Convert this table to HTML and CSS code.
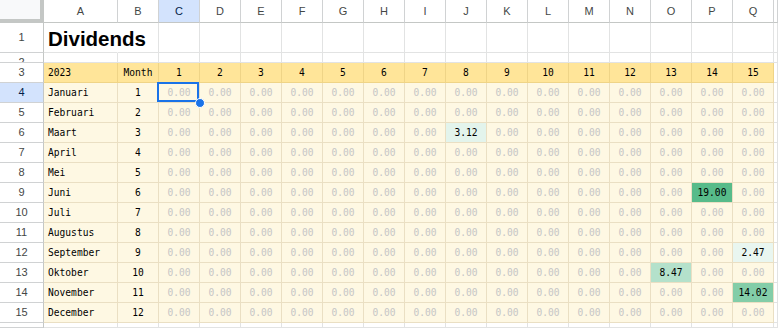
FILE: index.html
```html
<!DOCTYPE html>
<html>
<head>
<meta charset="utf-8">
<link rel="stylesheet" href="styles.css">
</head>
<body>
<div class="sheet">
<div class="c corner"></div><div class="c ch">A</div><div class="c ch">B</div><div class="c ch sel">C</div><div class="c ch">D</div><div class="c ch">E</div><div class="c ch">F</div><div class="c ch">G</div><div class="c ch">H</div><div class="c ch">I</div><div class="c ch">J</div><div class="c ch">K</div><div class="c ch">L</div><div class="c ch">M</div><div class="c ch">N</div><div class="c ch">O</div><div class="c ch">P</div><div class="c ch">Q</div><div class="c ch"></div>

<div class="c rh">1</div><div class="c w title">Dividends</div><div class="c w"></div><div class="c w"></div><div class="c w"></div><div class="c w"></div><div class="c w"></div><div class="c w"></div><div class="c w"></div><div class="c w"></div><div class="c w"></div><div class="c w"></div><div class="c w"></div><div class="c w"></div><div class="c w"></div><div class="c w"></div><div class="c w"></div><div class="c w"></div><div class="c w"></div>

<div class="c rh short">2</div><div class="c w"></div><div class="c w"></div><div class="c w"></div><div class="c w"></div><div class="c w"></div><div class="c w"></div><div class="c w"></div><div class="c w"></div><div class="c w"></div><div class="c w"></div><div class="c w"></div><div class="c w"></div><div class="c w"></div><div class="c w"></div><div class="c w"></div><div class="c w"></div><div class="c w"></div><div class="c w"></div>

<div class="c rh">3</div><div class="c y l">2023</div><div class="c y">Month</div><div class="c y">1</div><div class="c y">2</div><div class="c y">3</div><div class="c y">4</div><div class="c y">5</div><div class="c y">6</div><div class="c y">7</div><div class="c y">8</div><div class="c y">9</div><div class="c y">10</div><div class="c y">11</div><div class="c y">12</div><div class="c y">13</div><div class="c y">14</div><div class="c y">15</div><div class="c w"></div>

<div class="c rh sel">4</div><div class="c d l">Januari</div><div class="c d">1</div><div class="c d z active">0.00</div><div class="c d z">0.00</div><div class="c d z">0.00</div><div class="c d z">0.00</div><div class="c d z">0.00</div><div class="c d z">0.00</div><div class="c d z">0.00</div><div class="c d z">0.00</div><div class="c d z">0.00</div><div class="c d z">0.00</div><div class="c d z">0.00</div><div class="c d z">0.00</div><div class="c d z">0.00</div><div class="c d z">0.00</div><div class="c d z">0.00</div><div class="c w"></div>

<div class="c rh">5</div><div class="c d l">Februari</div><div class="c d">2</div><div class="c d z">0.00</div><div class="c d z">0.00</div><div class="c d z">0.00</div><div class="c d z">0.00</div><div class="c d z">0.00</div><div class="c d z">0.00</div><div class="c d z">0.00</div><div class="c d z">0.00</div><div class="c d z">0.00</div><div class="c d z">0.00</div><div class="c d z">0.00</div><div class="c d z">0.00</div><div class="c d z">0.00</div><div class="c d z">0.00</div><div class="c d z">0.00</div><div class="c w"></div>

<div class="c rh">6</div><div class="c d l">Maart</div><div class="c d">3</div><div class="c d z">0.00</div><div class="c d z">0.00</div><div class="c d z">0.00</div><div class="c d z">0.00</div><div class="c d z">0.00</div><div class="c d z">0.00</div><div class="c d z">0.00</div><div class="c d g1">3.12</div><div class="c d z">0.00</div><div class="c d z">0.00</div><div class="c d z">0.00</div><div class="c d z">0.00</div><div class="c d z">0.00</div><div class="c d z">0.00</div><div class="c d z">0.00</div><div class="c w"></div>

<div class="c rh">7</div><div class="c d l">April</div><div class="c d">4</div><div class="c d z">0.00</div><div class="c d z">0.00</div><div class="c d z">0.00</div><div class="c d z">0.00</div><div class="c d z">0.00</div><div class="c d z">0.00</div><div class="c d z">0.00</div><div class="c d z">0.00</div><div class="c d z">0.00</div><div class="c d z">0.00</div><div class="c d z">0.00</div><div class="c d z">0.00</div><div class="c d z">0.00</div><div class="c d z">0.00</div><div class="c d z">0.00</div><div class="c w"></div>

<div class="c rh">8</div><div class="c d l">Mei</div><div class="c d">5</div><div class="c d z">0.00</div><div class="c d z">0.00</div><div class="c d z">0.00</div><div class="c d z">0.00</div><div class="c d z">0.00</div><div class="c d z">0.00</div><div class="c d z">0.00</div><div class="c d z">0.00</div><div class="c d z">0.00</div><div class="c d z">0.00</div><div class="c d z">0.00</div><div class="c d z">0.00</div><div class="c d z">0.00</div><div class="c d z">0.00</div><div class="c d z">0.00</div><div class="c w"></div>

<div class="c rh">9</div><div class="c d l">Juni</div><div class="c d">6</div><div class="c d z">0.00</div><div class="c d z">0.00</div><div class="c d z">0.00</div><div class="c d z">0.00</div><div class="c d z">0.00</div><div class="c d z">0.00</div><div class="c d z">0.00</div><div class="c d z">0.00</div><div class="c d z">0.00</div><div class="c d z">0.00</div><div class="c d z">0.00</div><div class="c d z">0.00</div><div class="c d z">0.00</div><div class="c d g5">19.00</div><div class="c d z">0.00</div><div class="c w"></div>

<div class="c rh">10</div><div class="c d l">Juli</div><div class="c d">7</div><div class="c d z">0.00</div><div class="c d z">0.00</div><div class="c d z">0.00</div><div class="c d z">0.00</div><div class="c d z">0.00</div><div class="c d z">0.00</div><div class="c d z">0.00</div><div class="c d z">0.00</div><div class="c d z">0.00</div><div class="c d z">0.00</div><div class="c d z">0.00</div><div class="c d z">0.00</div><div class="c d z">0.00</div><div class="c d z">0.00</div><div class="c d z">0.00</div><div class="c w"></div>

<div class="c rh">11</div><div class="c d l">Augustus</div><div class="c d">8</div><div class="c d z">0.00</div><div class="c d z">0.00</div><div class="c d z">0.00</div><div class="c d z">0.00</div><div class="c d z">0.00</div><div class="c d z">0.00</div><div class="c d z">0.00</div><div class="c d z">0.00</div><div class="c d z">0.00</div><div class="c d z">0.00</div><div class="c d z">0.00</div><div class="c d z">0.00</div><div class="c d z">0.00</div><div class="c d z">0.00</div><div class="c d z">0.00</div><div class="c w"></div>

<div class="c rh">12</div><div class="c d l">September</div><div class="c d">9</div><div class="c d z">0.00</div><div class="c d z">0.00</div><div class="c d z">0.00</div><div class="c d z">0.00</div><div class="c d z">0.00</div><div class="c d z">0.00</div><div class="c d z">0.00</div><div class="c d z">0.00</div><div class="c d z">0.00</div><div class="c d z">0.00</div><div class="c d z">0.00</div><div class="c d z">0.00</div><div class="c d z">0.00</div><div class="c d z">0.00</div><div class="c d g0">2.47</div><div class="c w"></div>

<div class="c rh">13</div><div class="c d l">Oktober</div><div class="c d">10</div><div class="c d z">0.00</div><div class="c d z">0.00</div><div class="c d z">0.00</div><div class="c d z">0.00</div><div class="c d z">0.00</div><div class="c d z">0.00</div><div class="c d z">0.00</div><div class="c d z">0.00</div><div class="c d z">0.00</div><div class="c d z">0.00</div><div class="c d z">0.00</div><div class="c d z">0.00</div><div class="c d g3">8.47</div><div class="c d z">0.00</div><div class="c d z">0.00</div><div class="c w"></div>

<div class="c rh">14</div><div class="c d l">November</div><div class="c d">11</div><div class="c d z">0.00</div><div class="c d z">0.00</div><div class="c d z">0.00</div><div class="c d z">0.00</div><div class="c d z">0.00</div><div class="c d z">0.00</div><div class="c d z">0.00</div><div class="c d z">0.00</div><div class="c d z">0.00</div><div class="c d z">0.00</div><div class="c d z">0.00</div><div class="c d z">0.00</div><div class="c d z">0.00</div><div class="c d z">0.00</div><div class="c d g4">14.02</div><div class="c w"></div>

<div class="c rh">15</div><div class="c d l">December</div><div class="c d">12</div><div class="c d z">0.00</div><div class="c d z">0.00</div><div class="c d z">0.00</div><div class="c d z">0.00</div><div class="c d z">0.00</div><div class="c d z">0.00</div><div class="c d z">0.00</div><div class="c d z">0.00</div><div class="c d z">0.00</div><div class="c d z">0.00</div><div class="c d z">0.00</div><div class="c d z">0.00</div><div class="c d z">0.00</div><div class="c d z">0.00</div><div class="c d z">0.00</div><div class="c w"></div>

<div class="c rh"></div><div class="c w"></div><div class="c w"></div><div class="c w"></div><div class="c w"></div><div class="c w"></div><div class="c w"></div><div class="c w"></div><div class="c w"></div><div class="c w"></div><div class="c w"></div><div class="c w"></div><div class="c w"></div><div class="c w"></div><div class="c w"></div><div class="c w"></div><div class="c w"></div><div class="c w"></div><div class="c w"></div>
</div>
</body>
</html>
```

FILE: styles.css
```css
html, body {
  margin: 0;
  padding: 0;
  background: #ffffff;
  overflow: hidden;
}

.sheet {
  display: grid;
  grid-template-columns: 44px 74px repeat(16, 41px) 1fr;
  grid-template-rows: 23px 30px 10px repeat(13, 20px) 1fr;
  width: 778px;
  height: 328px;
  overflow: hidden;
  font-family: "DejaVu Sans Mono", "Liberation Mono", monospace;
  font-size: 9.6px;
  color: #000000;
}

.c {
  box-sizing: border-box;
  min-width: 0;
  min-height: 0;
  border-right: 1px solid #e2e3e3;
  border-bottom: 1px solid #e2e3e3;
  display: flex;
  align-items: center;
  justify-content: center;
  overflow: hidden;
  white-space: nowrap;
  line-height: 1;
}

.corner {
  background: #f8f9fa;
  border-right: 4px solid #c4c7c5;
  border-bottom: 4px solid #c4c7c5;
}

.ch {
  font-family: "Liberation Sans", Arial, sans-serif;
  font-size: 11px;
  color: #444746;
  background: #ffffff;
  border-right-color: #d0d2d3;
  border-bottom-color: #c4c7c5;
  padding-top: 1px;
}

.rh {
  font-family: "Liberation Sans", Arial, sans-serif;
  font-size: 11px;
  color: #444746;
  background: #ffffff;
  border-right-color: #c4c7c5;
  border-bottom-color: #d0d2d3;
}

.rh.short {
  align-items: flex-start;
  padding-top: 4px;
}

.sel {
  background: #d3e3fd;
  color: #041e49;
}

.w {
  background: #ffffff;
}

.title {
  overflow: visible;
  position: relative;
  z-index: 1;
  background: transparent;
  border-right-color: transparent;
  font-family: "Liberation Sans", Arial, sans-serif;
  font-weight: bold;
  font-size: 20.5px;
  line-height: 1.15;
  align-items: flex-end;
  justify-content: flex-start;
  padding: 0 0 1px 4px;
  color: #000000;
}

.y {
  background: #ffe599;
  border-right-color: #efd487;
  border-bottom-color: #efd487;
}

.d {
  background: #fef8e3;
  border-right-color: #eadfc3;
  border-bottom-color: #eadfc3;
}

.l {
  justify-content: flex-start;
  padding-left: 4px;
}

.z {
  color: #c6c6c6;
}

.g0 { background: #e9f6f0; }
.g1 { background: #e3f4ec; }
.g3 { background: #b4e1cb; }
.g4 { background: #83cda8; }
.g5 { background: #57bb8a; }

.active {
  position: relative;
  overflow: visible;
  z-index: 2;
}

.active::before {
  content: "";
  position: absolute;
  left: -2px;
  top: -1px;
  right: 0;
  bottom: 0;
  border: 2px solid #1a73e8;
  pointer-events: none;
}

.active::after {
  content: "";
  position: absolute;
  left: 36px;
  top: 15px;
  width: 8px;
  height: 8px;
  border-radius: 50%;
  background: #1a73e8;
  border: 1px solid #ffffff;
}
```
